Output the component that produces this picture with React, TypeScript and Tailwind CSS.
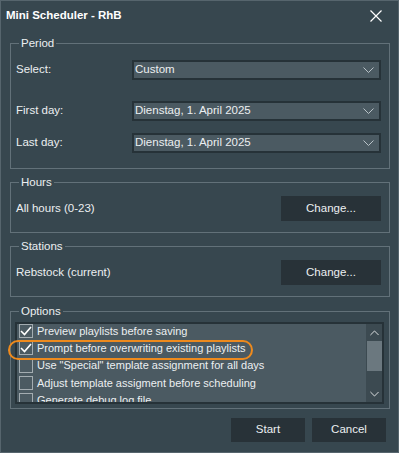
import React from 'react';

const font = { fontFamily: '"Liberation Sans", Arial, sans-serif' };

const Chevron = ({ up = false, className = '' }: { up?: boolean; className?: string }) => (
  <svg width="11" height="6" viewBox="0 0 11 6" className={className}>
    <path
      d={up ? 'M0.5 5.5 L5.5 0.5 L10.5 5.5' : 'M0.5 0.5 L5.5 5.5 L10.5 0.5'}
      fill="none"
      stroke="currentColor"
      strokeWidth="1"
    />
  </svg>
);

const Combo = ({ value }: { value: string }) => (
  <div className="w-[249px] h-[20px] border-2 border-[#263238] bg-[#4b5a62] flex items-center justify-between pl-[1px] pr-[5px]">
    <span className="text-[11.5px] text-[#eceff1]">{value}</span>
    <Chevron className="text-[#b8c2c7]" />
  </div>
);

const Group = ({ title, className = '', children }: { title: string; className?: string; children: React.ReactNode }) => (
  <div className={`relative border border-[#627179] ${className}`}>
    <span className="absolute -top-[8px] left-[8px] px-[2px] bg-[#37474f] text-[11.5px] leading-[15px] text-[#eceff1]">
      {title}
    </span>
    {children}
  </div>
);

const Btn = ({ label, className = '' }: { label: string; className?: string }) => (
  <div className={`bg-[#283238] flex items-center justify-center text-[11.5px] text-[#eceff1] ${className}`}>
    {label}
  </div>
);

const CheckRow = ({ label, checked }: { label: string; checked: boolean }) => (
  <div className="h-[17.25px] shrink-0 flex items-center gap-[4px] pl-[2px]">
    <div className="w-[14px] h-[14px] border-[1.5px] border-[#a3acb1] flex items-center justify-center shrink-0">
      {checked && (
        <svg width="12" height="10" viewBox="0 0 12 10">
          <path d="M1 5 L4.5 8.5 L11 1" fill="none" stroke="#ffffff" strokeWidth="1.6" />
        </svg>
      )}
    </div>
    <span className="text-[11px] text-[#eceff1] whitespace-nowrap">{label}</span>
  </div>
);

export default function App() {
  const options = [
    { label: 'Preview playlists before saving', checked: true },
    { label: 'Prompt before overwriting existing playlists', checked: true },
    { label: 'Use "Special" template assignment for all days', checked: false },
    { label: 'Adjust template assigment before scheduling', checked: false },
    { label: 'Generate debug log file', checked: false },
  ];

  return (
    <div style={font} className="w-[399px] h-[453px] bg-[#37474f] border border-[#56656d] flex flex-col text-[#eceff1]">
      {/* title bar */}
      <div className="h-[29px] flex items-center justify-between pl-[5px] pr-[16px]">
        <span className="text-[11.5px] font-bold text-white">Mini Scheduler - RhB</span>
        <svg width="12" height="12" viewBox="0 0 12 12">
          <path d="M0.5 0.5 L11.5 11.5 M11.5 0.5 L0.5 11.5" stroke="#ffffff" strokeWidth="1.2" />
        </svg>
      </div>

      <div className="pl-[9px] pr-[8px] mt-[13px] flex flex-col">
        <Group title="Period" className="h-[126px] pt-[16px] pl-[5px] pr-[8px]">
          <div className="flex items-center justify-between">
            <span className="text-[11.5px]">Select:</span>
            <Combo value="Custom" />
          </div>
          <div className="flex items-center justify-between mt-[21px]">
            <span className="text-[11.5px]">First day:</span>
            <Combo value="Dienstag, 1. April 2025" />
          </div>
          <div className="flex items-center justify-between mt-[12px]">
            <span className="text-[11.5px]">Last day:</span>
            <Combo value="Dienstag, 1. April 2025" />
          </div>
        </Group>

        <Group title="Hours" className="h-[51px] mt-[13px] pt-[13px] pl-[5px] pr-[8px]">
          <div className="flex items-center justify-between">
            <span className="text-[11.5px]">All hours (0-23)</span>
            <Btn label="Change..." className="w-[100px] h-[25px]" />
          </div>
        </Group>

        <Group title="Stations" className="h-[51px] mt-[13px] pt-[13px] pl-[5px] pr-[8px]">
          <div className="flex items-center justify-between">
            <span className="text-[11.5px]">Rebstock (current)</span>
            <Btn label="Change..." className="w-[100px] h-[25px]" />
          </div>
        </Group>

        <Group title="Options" className="h-[98px] mt-[14px] pt-[10px] pl-[4px] pr-[5px]">
          <div className="h-[82px] border-2 border-[#263238] bg-[#4b5a62] flex overflow-hidden">
            <div className="flex-1 flex flex-col overflow-hidden">
              <div className="-mt-[1.5px] flex flex-col">
                {options.map((o) => (
                  <CheckRow key={o.label} label={o.label} checked={o.checked} />
                ))}
              </div>
            </div>
            <div className="w-[16px] bg-[#3c4a51] flex flex-col items-center">
              <div className="h-[17px] flex items-center justify-center text-white">
                <Chevron up className="w-[9px]" />
              </div>
              <div className="w-[15px] h-[30px] bg-[#6b787f]" />
              <div className="flex-1" />
              <div className="h-[17px] flex items-center justify-center text-white">
                <Chevron className="w-[9px]" />
              </div>
            </div>
          </div>
          {/* highlight ring */}
          <div className="absolute left-[-3px] top-[28px] w-[245px] h-[20px] rounded-full border-2 border-[#ee8a1d]" />
        </Group>

        <div className="flex justify-end gap-[7px] mt-[9px] pr-[4px]">
          <Btn label="Start" className="w-[74px] h-[24px]" />
          <Btn label="Cancel" className="w-[74px] h-[24px]" />
        </div>
      </div>
    </div>
  );
}
